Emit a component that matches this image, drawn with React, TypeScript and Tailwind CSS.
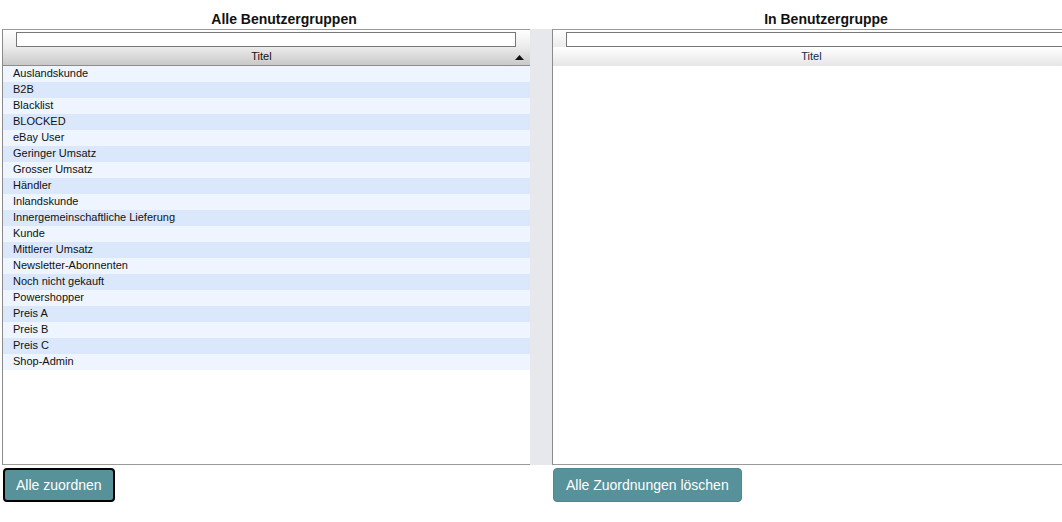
const groups = [
  "Auslandskunde",
  "B2B",
  "Blacklist",
  "BLOCKED",
  "eBay User",
  "Geringer Umsatz",
  "Grosser Umsatz",
  "Händler",
  "Inlandskunde",
  "Innergemeinschaftliche Lieferung",
  "Kunde",
  "Mittlerer Umsatz",
  "Newsletter-Abonnenten",
  "Noch nicht gekauft",
  "Powershopper",
  "Preis A",
  "Preis B",
  "Preis C",
  "Shop-Admin",
];

export default function App() {
  return (
    <div className="min-h-screen overflow-hidden bg-white pl-[2px] font-['Liberation_Sans',Arial,sans-serif] text-black">
      {/* Headings */}
      <div className="flex h-[29px] w-[1200px]">
        <h2 className="w-[550px] pl-[14px] pt-[11px] text-center text-[14px] font-bold leading-[16px] text-[#111]">
          Alle Benutzergruppen
        </h2>
        <h2 className="w-[548px] pt-[11px] text-center text-[14px] font-bold leading-[16px] text-[#111]">
          In Benutzergruppe
        </h2>
      </div>

      {/* Lists */}
      <div className="flex h-[436px] w-[1200px]">
        {/* Left list */}
        <div className="flex w-[528px] flex-col border-y border-l border-y-[#9a9a9a] border-l-[#8a8a8a] bg-white">
          <div className="h-[17px] bg-gradient-to-b from-white to-[#ebebeb] pl-[13px] pr-[14px] pt-[2px]">
            <div className="h-[15px] border border-[#777] bg-white" />
          </div>
          <div className="relative flex h-[19px] items-center border-b border-[#8c8c8c] bg-gradient-to-b from-[#ececec] to-[#c9c9c9] pr-[10px]">
            <span className="flex-1 text-center text-[11px] leading-[16px] text-[#111]">Titel</span>
            <svg className="absolute right-[6px] top-[8px]" width="9" height="5" viewBox="0 0 9 5">
              <polygon points="4.5,0 9,5 0,5" fill="#111" />
            </svg>
          </div>
          <div className="flex flex-col">
            {groups.map((g, i) => (
              <div
                key={g}
                className={
                  "h-[16px] pl-[10px] text-[11px] leading-[14px] text-[#111] " +
                  (i % 2 === 0 ? "bg-[#eef5ff]" : "bg-[#dbe8fc]")
                }
              >
                {g}
              </div>
            ))}
          </div>
        </div>

        {/* Separator */}
        <div className="w-[22px] bg-[#e6e8eb]" />

        {/* Right list */}
        <div className="flex w-[540px] flex-col border-y border-l border-y-[#9a9a9a] border-l-[#8a8a8a] bg-white">
          <div className="h-[17px] bg-gradient-to-b from-white to-[#ebebeb] pl-[13px] pt-[2px]">
            <div className="h-[15px] border border-[#777] bg-white" />
          </div>
          <div className="flex h-[19px] w-[527px] items-center bg-gradient-to-b from-white to-[#e6e6e6] pr-[10px]">
            <span className="flex-1 pb-[1px] text-center text-[11px] leading-[16px] text-[#0f2a4d]">Titel</span>
          </div>
        </div>
      </div>

      {/* Buttons */}
      <div className="mt-[3px] grid w-[1100px] grid-cols-[551px_auto]">
        <div className="pl-[1px]">
          <button className="h-[34px] rounded-[4px] border-2 border-black bg-[#57919a] px-[11px] text-[14px] leading-[16px] text-white">
            Alle zuordnen
          </button>
        </div>
        <div>
          <button className="h-[34px] rounded-[4px] border border-[#4f8790] bg-[#57919a] px-[12px] text-[14px] leading-[16px] text-white">
            Alle Zuordnungen löschen
          </button>
        </div>
      </div>
    </div>
  );
}
